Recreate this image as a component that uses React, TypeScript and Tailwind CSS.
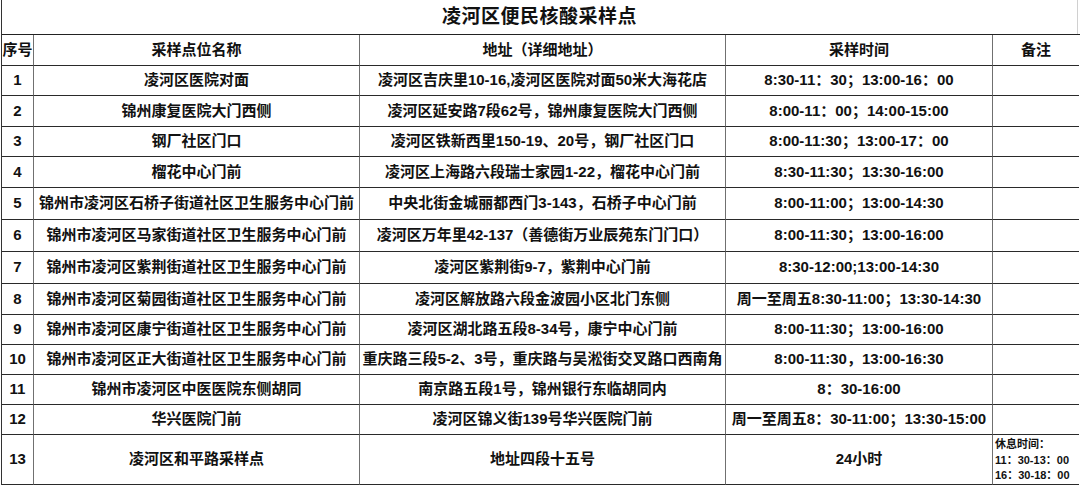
import React from "react";

type Row = { no: string; name: string; addr: string; time: string; h: number };

const rows: Row[] = [
  { no: "1", name: "凌河区医院对面", addr: "凌河区吉庆里10-16,凌河区医院对面50米大海花店", time: "8:30-11：30；13:00-16：00", h: 30 },
  { no: "2", name: "锦州康复医院大门西侧", addr: "凌河区延安路7段62号，锦州康复医院大门西侧", time: "8:00-11：00；14:00-15:00", h: 31 },
  { no: "3", name: "钢厂社区门口", addr: "凌河区铁新西里150-19、20号，钢厂社区门口", time: "8:00-11:30；13:00-17：00", h: 30 },
  { no: "4", name: "榴花中心门前", addr: "凌河区上海路六段瑞士家园1-22，榴花中心门前", time: "8:30-11:30；13:30-16:00", h: 31 },
  { no: "5", name: "锦州市凌河区石桥子街道社区卫生服务中心门前", addr: "中央北街金城丽都西门3-143，石桥子中心门前", time: "8:00-11:00；13:00-14:30", h: 32 },
  { no: "6", name: "锦州市凌河区马家街道社区卫生服务中心门前", addr: "凌河区万年里42-137（善德街万业辰苑东门门口）", time: "8:00-11:30；13:00-16:00", h: 32 },
  { no: "7", name: "锦州市凌河区紫荆街道社区卫生服务中心门前", addr: "凌河区紫荆街9-7，紫荆中心门前", time: "8:30-12:00;13:00-14:30", h: 32 },
  { no: "8", name: "锦州市凌河区菊园街道社区卫生服务中心门前", addr: "凌河区解放路六段金波园小区北门东侧", time: "周一至周五8:30-11:00；13:30-14:30", h: 31 },
  { no: "9", name: "锦州市凌河区康宁街道社区卫生服务中心门前", addr: "凌河区湖北路五段8-34号，康宁中心门前", time: "8:00-11:30；13:00-16:00", h: 30 },
  { no: "10", name: "锦州市凌河区正大街道社区卫生服务中心门前", addr: "重庆路三段5-2、3号，重庆路与吴淞街交叉路口西南角", time: "8:00-11:30，13:00-16:30", h: 30 },
  { no: "11", name: "锦州市凌河区中医医院东侧胡同", addr: "南京路五段1号，锦州银行东临胡同内", time: "8：30-16:00", h: 30 },
  { no: "12", name: "华兴医院门前", addr: "凌河区锦义街139号华兴医院门前", time: "周一至周五8：30-11:00；13:30-15:00", h: 30 },
];

const font = { fontFamily: '"Liberation Sans", "Noto Sans CJK SC", sans-serif' };

function Cell({ children, last }: { children?: React.ReactNode; last?: boolean }) {
  return (
    <div
      className={
        "flex items-center justify-center whitespace-nowrap overflow-hidden border-b border-[#2a2a2a] " +
        (last ? "" : "border-r-[1.5px] border-r-[#707070]")
      }
    >
      {children}
    </div>
  );
}

export default function App() {
  return (
    <div
      className="w-[1080px] h-[485px] bg-white text-[#111] overflow-hidden pl-[1px]"
      style={font}
    >
      <div className="h-full border-l-[1.5px] border-[#333]">
        <div className="h-[34px] flex items-center justify-center border-r border-r-[#d0d0d0] mr-[2px]">
          <span className="text-[19px] font-bold tracking-[0.5px] text-[#111]">凌河区便民核酸采样点</span>
        </div>
        <div className="border-t-[1.5px] border-[#222] text-[15px] font-bold">
          <div className="grid grid-cols-[32px_326px_366px_267px_86px] h-[31px]">
            <Cell>序号</Cell>
            <Cell>采样点位名称</Cell>
            <Cell>地址（详细地址）</Cell>
            <Cell>采样时间</Cell>
            <Cell last>备注</Cell>
          </div>
          {rows.map((r) => (
            <div
              key={r.no}
              className="grid grid-cols-[32px_326px_366px_267px_86px]"
              style={{ height: r.h }}
            >
              <Cell>{r.no}</Cell>
              <Cell>{r.name}</Cell>
              <Cell>{r.addr}</Cell>
              <Cell>{r.time}</Cell>
              <Cell last />
            </div>
          ))}
          <div className="grid grid-cols-[32px_326px_366px_267px_86px] h-[48px]">
            <Cell>13</Cell>
            <Cell>凌河区和平路采样点</Cell>
            <Cell>地址四段十五号</Cell>
            <Cell>24小时</Cell>
            <div className="border-b border-[#2a2a2a] flex flex-col justify-start pl-[2px] pt-[2px] text-[11px] leading-[15.5px] font-bold whitespace-nowrap">
              <span>休息时间：</span>
              <span>11：30-13：00</span>
              <span>16：30-18：00</span>
            </div>
          </div>
        </div>
      </div>
    </div>
  );
}
